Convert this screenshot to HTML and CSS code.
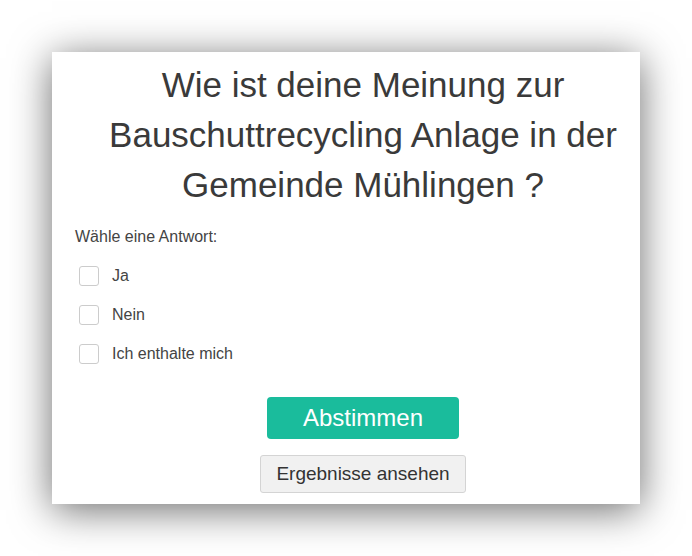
FILE: index.html
```html
<!doctype html>
<html>
<head>
<meta charset="utf-8">
<meta name="viewport" content="width=device-width, initial-scale=1.0">
<link rel="stylesheet" href="styles.css">
<title>Umfrage</title>
</head>
<body>
<div class="poll">
    <h2 class="poll-title">Wie ist deine Meinung zur Bauschuttrecycling Anlage in der Gemeinde Mühlingen ?</h2>

    <p class="poll-hint">Wähle eine Antwort:</p>

    <ul class="poll-options">
        <li><label><span class="box"></span>Ja</label></li>
        <li><label><span class="box"></span>Nein</label></li>
        <li><label><span class="box"></span>Ich enthalte mich</label></li>
    </ul>

    <div class="poll-actions">
        <button class="btn-vote">Abstimmen</button>
        <button class="btn-results">Ergebnisse ansehen</button>
    </div>
</div>
</body>
</html>
```

FILE: styles.css
```css
h2,
p,
ul {
    margin: 0;
    padding: 0;
}
body {
    font-family: "Liberation Sans", Arial, sans-serif;
    color: #444;
    background-color: white;
    margin: 0;
    padding: 52px;
}
.poll {
    width: 588px;
    box-sizing: border-box;
    background: white;
    padding: 8px 12px 11px 23px;
    box-shadow: 0 6px 38px rgba(0, 0, 0, 0.58);
}
.poll-title {
    font-size: 35px;
    font-weight: normal;
    line-height: 50px;
    color: #3a3a3a;
    text-align: center;
    padding-left: 23px;
    margin-bottom: 17px;
}
.poll-hint {
    font-size: 16px;
    line-height: 20px;
    margin-bottom: 9px;
}
.poll-options {
    list-style: none;
}
.poll-options li {
    height: 39px;
    display: flex;
    align-items: center;
}
.poll-options label {
    display: flex;
    align-items: center;
    font-size: 16px;
    color: #444;
}
.box {
    width: 18px;
    height: 18px;
    border: 1px solid #ccc;
    border-radius: 3px;
    margin-left: 4px;
    margin-right: 13px;
}
.poll-actions {
    display: flex;
    flex-direction: column;
    align-items: center;
    padding-left: 23px;
    margin-top: 24px;
}
button {
    font-family: "Liberation Sans", Arial, sans-serif;
    cursor: pointer;
}
.btn-vote {
    width: 192px;
    height: 42px;
    background: #1abc9c;
    color: white;
    border: 0;
    border-radius: 4px;
    font-size: 24px;
    margin-bottom: 16px;
}
.btn-results {
    width: 206px;
    height: 38px;
    background: #f1f1f1;
    color: #333;
    border: 1px solid #d4d4d4;
    border-radius: 3px;
    font-size: 19px;
}
```
